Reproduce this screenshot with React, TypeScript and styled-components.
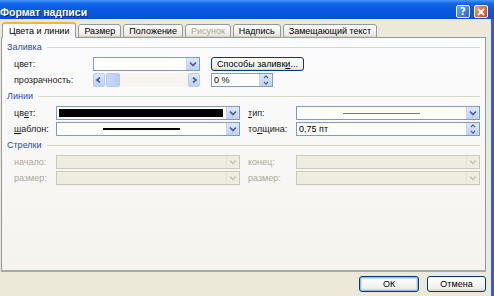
import styled, { createGlobalStyle } from 'styled-components'

const GlobalStyle = createGlobalStyle`
  html, body { margin: 0; padding: 0; }
  body {
    width: 494px;
    height: 296px;
    overflow: hidden;
    font-family: "Liberation Sans", Arial, sans-serif;
    font-size: 9px;
    color: #000;
  }
`

function Chevron({ dir = 'down', color = '#4d6185' }: { dir?: 'down' | 'up' | 'left' | 'right'; color?: string }) {
  const d = {
    down: 'M1 1.5 L4 4.5 L7 1.5',
    up: 'M1 4.5 L4 1.5 L7 4.5',
    left: 'M5 0.5 L2 3 L5 5.5',
    right: 'M3 0.5 L6 3 L3 5.5',
  }[dir]
  return (
    <svg width="8" height="6" viewBox="0 0 8 6">
      <path d={d} stroke={color} strokeWidth="1.7" fill="none" />
    </svg>
  )
}

function Combo({ w, disabled, children }: { w: number; disabled?: boolean; children?: React.ReactNode }) {
  return (
    <ComboBox $w={w} $disabled={disabled}>
      <ComboValue>{children}</ComboValue>
      <DropBtn $disabled={disabled}>
        <Chevron color={disabled ? '#c9c8bd' : '#4d6185'} />
      </DropBtn>
    </ComboBox>
  )
}

function Spin({ w, value }: { w: number; value: string }) {
  return (
    <ComboBox $w={w}>
      <SpinValue>{value}</SpinValue>
      <SpinBtns>
        <SpinHalf>
          <Chevron dir="up" />
        </SpinHalf>
        <SpinHalf>
          <Chevron dir="down" />
        </SpinHalf>
      </SpinBtns>
    </ComboBox>
  )
}

export default function App() {
  return (
    <>
      <GlobalStyle />
      <Window>
        <TitleBar>
          <Title>Формат надписи</Title>
          <CaptionBtns>
            <CapBtn $kind="help">?</CapBtn>
            <CapBtn $kind="close">
              <svg width="8" height="8" viewBox="0 0 8 8">
                <path d="M1 1 L7 7 M7 1 L1 7" stroke="#fff" strokeWidth="1.8" />
              </svg>
            </CapBtn>
          </CaptionBtns>
        </TitleBar>
        <Body>
          <Tabs>
            <Tab $active>Цвета и линии</Tab>
            <Tab>Размер</Tab>
            <Tab>Положение</Tab>
            <Tab $disabled>Рисунок</Tab>
            <Tab>Надпись</Tab>
            <Tab>Замещающий текст</Tab>
          </Tabs>
          <Panel>
            <Section>
              <SectionHead>Заливка</SectionHead>
              <FillGrid>
                <Label>цвет:</Label>
                <Combo w={107} />
                <PushButton>
                  Способы заливк<u>и</u>...
                </PushButton>
                <Label>прозрачность:</Label>
                <ScrollBar>
                  <ScrollArrow>
                    <Chevron dir="left" />
                  </ScrollArrow>
                  <ScrollTrack>
                    <Thumb />
                  </ScrollTrack>
                  <ScrollArrow>
                    <Chevron dir="right" />
                  </ScrollArrow>
                </ScrollBar>
                <Spin w={62} value="0 %" />
              </FillGrid>
            </Section>

            <Section>
              <SectionHead>Линии</SectionHead>
              <LineGrid>
                <Label>
                  цв<u>е</u>т:
                </Label>
                <Combo w={184}>
                  <BlackFill />
                </Combo>
                <Label>
                  <u>т</u>ип:
                </Label>
                <Combo w={184}>
                  <LineSample $thick={1} $len={77} $color="#7a7a7a" />
                </Combo>
                <Label>
                  <u>ш</u>аблон:
                </Label>
                <Combo w={184}>
                  <LineSample $thick={2} $len={77} $color="#000" />
                </Combo>
                <Label>
                  то<u>л</u>щина:
                </Label>
                <Spin w={184} value="0,75 пт" />
              </LineGrid>
            </Section>

            <Section>
              <SectionHead>Стрелки</SectionHead>
              <LineGrid>
                <Label $disabled>начало:</Label>
                <Combo w={184} disabled />
                <Label $disabled>конец:</Label>
                <Combo w={184} disabled />
                <Label $disabled>размер:</Label>
                <Combo w={184} disabled />
                <Label $disabled>размер:</Label>
                <Combo w={184} disabled />
              </LineGrid>
            </Section>
          </Panel>
          <Footer>
            <DlgButton $default>ОК</DlgButton>
            <DlgButton>Отмена</DlgButton>
          </Footer>
        </Body>
      </Window>
    </>
  )
}

const Window = styled.div`
  width: 494px;
  height: 296px;
  display: flex;
  flex-direction: column;
  background: #ece9d8;
  overflow: hidden;
`

const TitleBar = styled.div`
  height: 19px;
  flex: none;
  display: flex;
  align-items: center;
  justify-content: space-between;
  padding: 0 6px 0 0;
  background: linear-gradient(#4a98f7 0%, #1067ec 18%, #0858e1 50%, #0654dc 85%, #0a4cc4 100%);
`

const Title = styled.div`
  font-family: "Liberation Sans", Arial, sans-serif;
  font-weight: bold;
  font-size: 10.5px;
  color: #fff;
  margin-top: 4px;
  text-shadow: 1px 1px 0 #0a2f8a;
`

const CaptionBtns = styled.div`
  display: flex;
  gap: 4px;
  margin-top: 4px;
`

const CapBtn = styled.div<{ $kind: 'help' | 'close' }>`
  width: 14px;
  height: 13px;
  box-sizing: border-box;
  border: 1px solid #fff;
  border-radius: 2px;
  display: flex;
  align-items: center;
  justify-content: center;
  color: #fff;
  font-family: "DejaVu Sans", sans-serif;
  font-weight: bold;
  font-size: 10px;
  background: ${(p) =>
    p.$kind === 'help'
      ? 'linear-gradient(135deg, #6aa6ff, #2463e0)'
      : 'linear-gradient(135deg, #f39a6c, #d4421c)'};
`

const Body = styled.div`
  flex: 1;
  display: flex;
  flex-direction: column;
  padding: 3px 5px 0 1px;
  border-right: 3px solid #2f5fd0;
`

const Tabs = styled.div`
  display: flex;
  align-items: flex-end;
  gap: 2px;
  padding-left: 1px;
  height: 16px;
  position: relative;
  z-index: 1;
  margin-bottom: -1px;
`

const Tab = styled.div<{ $active?: boolean; $disabled?: boolean }>`
  height: ${(p) => (p.$active ? '16px' : '14px')};
  box-sizing: border-box;
  padding: 0 ${(p) => (p.$active ? '6px' : '5px')};
  display: flex;
  align-items: center;
  border: 1px solid #919b9c;
  border-bottom: ${(p) => (p.$active ? '1px solid #fcfcfe' : '1px solid #919b9c')};
  border-top: ${(p) => (p.$active ? '2px solid #f5b33c' : '1px solid #919b9c')};
  border-radius: 3px 3px 0 0;
  background: ${(p) => (p.$active ? '#fcfcfe' : 'linear-gradient(#ffffff, #ecebe6 80%, #d6d0c5)')};
  color: ${(p) => (p.$disabled ? '#aca899' : '#000')};
  white-space: nowrap;
`

const Panel = styled.div`
  height: 235px;
  flex: none;
  box-sizing: border-box;
  border: 1px solid #919b9c;
  border-bottom: 2px solid #a8aaa6;
  background: linear-gradient(#fcfcfe, #f4f3ee);
  padding: 3px 5px 0 5px;
  display: flex;
  flex-direction: column;
  gap: 3px;
`

const Section = styled.div`
  display: flex;
  flex-direction: column;
  gap: 4px;
`

const SectionHead = styled.div`
  display: flex;
  align-items: center;
  gap: 5px;
  height: 12px;
  color: #1e48c8;
  &::after {
    content: '';
    flex: 1;
    height: 1px;
    background: #d6d5c8;
  }
`

const FillGrid = styled.div`
  display: grid;
  grid-template-columns: 68px 107px 93px;
  grid-auto-rows: 14px;
  column-gap: 11px;
  row-gap: 2px;
  padding-left: 7px;
`

const LineGrid = styled.div`
  display: grid;
  grid-template-columns: 42px 184px 56px 184px;
  grid-auto-rows: 14px;
  row-gap: 2px;
  padding-left: 7px;
  & > :nth-child(4n + 3) {
    padding-left: 8px;
  }
`

const Label = styled.div<{ $disabled?: boolean }>`
  display: flex;
  align-items: center;
  white-space: nowrap;
  color: ${(p) => (p.$disabled ? '#aca899' : '#1a1a1a')};
  u {
    text-underline-offset: 1px;
  }
`

const ComboBox = styled.div<{ $w: number; $disabled?: boolean }>`
  width: ${(p) => p.$w}px;
  height: 14px;
  box-sizing: border-box;
  border: 1px solid ${(p) => (p.$disabled ? '#cbc9bb' : '#7f9db9')};
  background: ${(p) => (p.$disabled ? '#efeddf' : '#fff')};
  display: flex;
  align-items: stretch;
`

const ComboValue = styled.div`
  flex: 1;
  display: flex;
  align-items: center;
  justify-content: center;
  padding: 2px 3px 2px 2px;
`

const DropBtn = styled.div<{ $disabled?: boolean }>`
  width: 12px;
  display: flex;
  align-items: center;
  justify-content: center;
  border-left: 1px solid ${(p) => (p.$disabled ? '#e6e4d6' : '#c3d3fd')};
  background: ${(p) => (p.$disabled ? '#efeddf' : 'linear-gradient(#dde8fe, #bcd0fa)')};
`

const BlackFill = styled.div`
  align-self: stretch;
  flex: 1;
  background: #000;
`

const LineSample = styled.div<{ $thick: number; $len: number; $color: string }>`
  width: ${(p) => p.$len}px;
  height: ${(p) => p.$thick}px;
  background: ${(p) => p.$color};
`

const SpinValue = styled.div`
  flex: 1;
  display: flex;
  align-items: center;
  padding-left: 2px;
`

const SpinBtns = styled.div`
  width: 12px;
  display: flex;
  flex-direction: column;
  background: linear-gradient(#dde8fe, #bcd0fa);
  border-left: 1px solid #c3d3fd;
`

const SpinHalf = styled.div`
  flex: 1;
  display: flex;
  align-items: center;
  justify-content: center;
  overflow: hidden;
  svg {
    transform: scale(0.7);
  }
`

const PushButton = styled.div`
  width: 93px;
  height: 14px;
  box-sizing: border-box;
  border: 1px solid #003c74;
  border-radius: 3px;
  background: linear-gradient(#ffffff, #f0f0ea 80%, #d8d6cb);
  display: flex;
  align-items: center;
  justify-content: center;
  white-space: nowrap;
`

const ScrollBar = styled.div`
  width: 107px;
  height: 14px;
  display: flex;
  background: #f6f5f0;
`

const ScrollArrow = styled.div`
  width: 12px;
  display: flex;
  align-items: center;
  justify-content: center;
  border-radius: 2px;
  background: linear-gradient(#dde8fe, #bcd0fa);
  border: 1px solid #b9cdf7;
  box-sizing: border-box;
`

const ScrollTrack = styled.div`
  flex: 1;
  display: flex;
  align-items: stretch;
`

const Thumb = styled.div`
  width: 12px;
  margin-left: 1px;
  border-radius: 2px;
  background: linear-gradient(90deg, #c9d8fc, #b8cbf6);
  border: 1px solid #b5c8f3;
`

const Footer = styled.div`
  flex: 1;
  display: flex;
  justify-content: flex-end;
  align-items: center;
  gap: 8px;
`

const DlgButton = styled.div<{ $default?: boolean }>`
  width: ${(p) => (p.$default ? '60px' : '59px')};
  height: 16px;
  box-sizing: border-box;
  border: 1px solid #003c74;
  border-radius: 3px;
  background: linear-gradient(#ffffff, #f0f0ea 80%, #d8d6cb);
  box-shadow: ${(p) => (p.$default ? 'inset 0 0 0 1px #98b8f4, inset 0 0 0 2px #cddcfa' : 'none')};
  display: flex;
  align-items: center;
  justify-content: center;
`
